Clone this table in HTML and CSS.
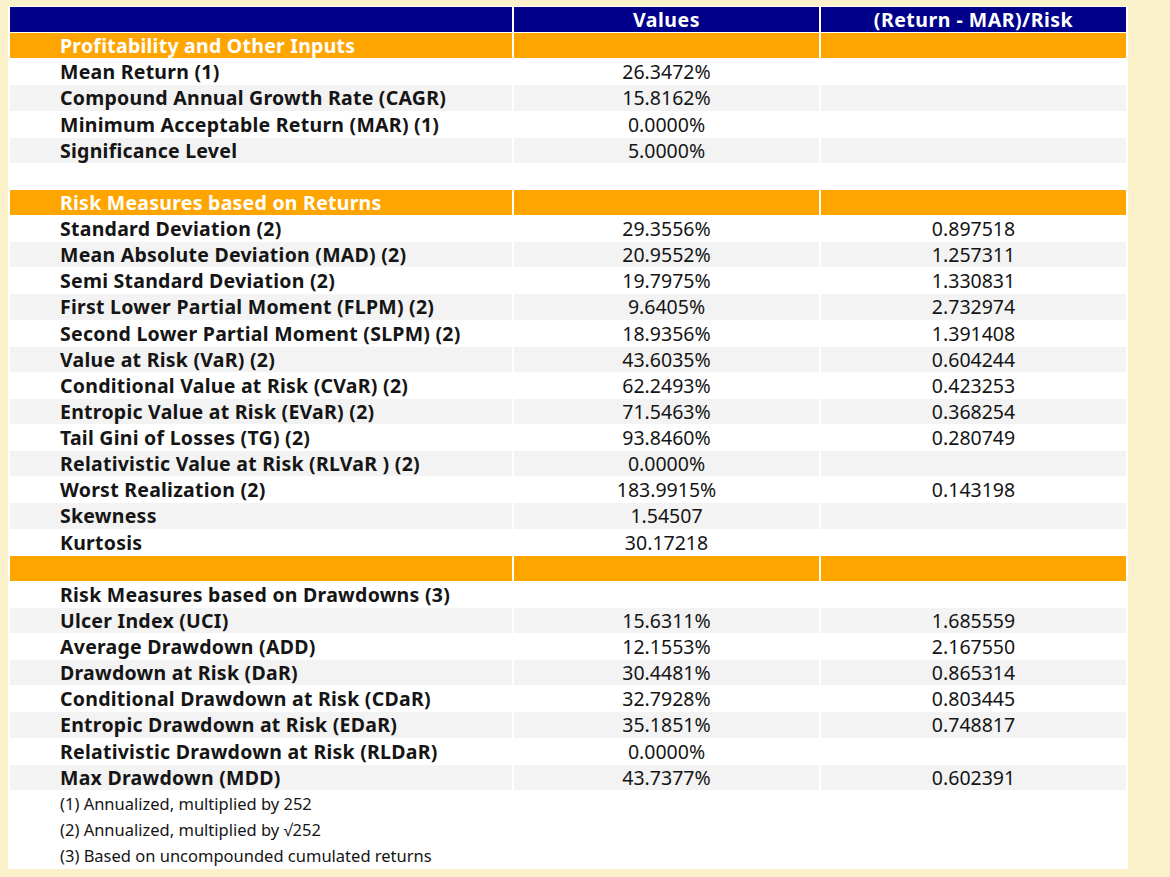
FILE: index.html
```html
<!DOCTYPE html>
<html>
<head>
<meta charset="utf-8">
<link rel="stylesheet" href="styles.css">
</head>
<body>
<div class="panel">
<table class="stats">
  <colgroup><col class="c1"><col class="c2"><col class="c3"></colgroup>
  <thead>
    <tr class="head"><th></th><th>Values</th><th>(Return - MAR)/Risk</th></tr>
  </thead>
  <tbody>
    <tr class="section"><td>Profitability and Other Inputs</td><td></td><td></td></tr>
    <tr><td>Mean Return (1)</td><td>26.3472%</td><td></td></tr>
    <tr class="alt"><td>Compound Annual Growth Rate (CAGR)</td><td>15.8162%</td><td></td></tr>
    <tr><td>Minimum Acceptable Return (MAR) (1)</td><td>0.0000%</td><td></td></tr>
    <tr class="alt"><td>Significance Level</td><td>5.0000%</td><td></td></tr>
    <tr><td></td><td></td><td></td></tr>
    <tr class="section"><td>Risk Measures based on Returns</td><td></td><td></td></tr>
    <tr><td>Standard Deviation (2)</td><td>29.3556%</td><td>0.897518</td></tr>
    <tr class="alt"><td>Mean Absolute Deviation (MAD) (2)</td><td>20.9552%</td><td>1.257311</td></tr>
    <tr><td>Semi Standard Deviation (2)</td><td>19.7975%</td><td>1.330831</td></tr>
    <tr class="alt"><td>First Lower Partial Moment (FLPM) (2)</td><td>9.6405%</td><td>2.732974</td></tr>
    <tr><td>Second Lower Partial Moment (SLPM) (2)</td><td>18.9356%</td><td>1.391408</td></tr>
    <tr class="alt"><td>Value at Risk (VaR) (2)</td><td>43.6035%</td><td>0.604244</td></tr>
    <tr><td>Conditional Value at Risk (CVaR) (2)</td><td>62.2493%</td><td>0.423253</td></tr>
    <tr class="alt"><td>Entropic Value at Risk (EVaR) (2)</td><td>71.5463%</td><td>0.368254</td></tr>
    <tr><td>Tail Gini of Losses (TG) (2)</td><td>93.8460%</td><td>0.280749</td></tr>
    <tr class="alt"><td>Relativistic Value at Risk (RLVaR ) (2)</td><td>0.0000%</td><td></td></tr>
    <tr><td>Worst Realization (2)</td><td>183.9915%</td><td>0.143198</td></tr>
    <tr class="alt"><td>Skewness</td><td>1.54507</td><td></td></tr>
    <tr><td>Kurtosis</td><td>30.17218</td><td></td></tr>
    <tr class="section"><td></td><td></td><td></td></tr>
    <tr><td>Risk Measures based on Drawdowns (3)</td><td></td><td></td></tr>
    <tr class="alt"><td>Ulcer Index (UCI)</td><td>15.6311%</td><td>1.685559</td></tr>
    <tr><td>Average Drawdown (ADD)</td><td>12.1553%</td><td>2.167550</td></tr>
    <tr class="alt"><td>Drawdown at Risk (DaR)</td><td>30.4481%</td><td>0.865314</td></tr>
    <tr><td>Conditional Drawdown at Risk (CDaR)</td><td>32.7928%</td><td>0.803445</td></tr>
    <tr class="alt"><td>Entropic Drawdown at Risk (EDaR)</td><td>35.1851%</td><td>0.748817</td></tr>
    <tr><td>Relativistic Drawdown at Risk (RLDaR)</td><td>0.0000%</td><td></td></tr>
    <tr class="alt"><td>Max Drawdown (MDD)</td><td>43.7377%</td><td>0.602391</td></tr>
    <tr class="note"><td>(1) Annualized, multiplied by 252</td><td></td><td></td></tr>
    <tr class="note"><td>(2) Annualized, multiplied by √252</td><td></td><td></td></tr>
    <tr class="note"><td>(3) Based on uncompounded cumulated returns</td><td></td><td></td></tr>
  </tbody>
</table>
</div>
</body>
</html>
```

FILE: styles.css
```css
html, body {
  margin: 0;
  padding: 0;
  background: #faf0ca;
}
body {
  font-family: "Noto Sans", "Open Sans", sans-serif;
  color: #151515;
}
.panel {
  margin: 6px 0 0 8px;
  width: 1120px;
  background: #fff;
}
.stats {
  border-collapse: separate;
  border-spacing: 2px 1px;
  table-layout: fixed;
  width: 1120px;
}
.c1 { width: 502px; }
.c2 { width: 305px; }
.c3 { width: 305px; }
.stats th, .stats td {
  height: 25.14px;
  padding: 0;
  line-height: 25px;
  white-space: nowrap;
  font-size: 19.5px;
  text-align: center;
  font-weight: normal;
}
.stats td:first-child {
  text-align: left;
  padding-left: 50px;
  font-weight: bold;
  letter-spacing: 0.25px;
}
.stats .head th {
  background: #00008b;
  color: #fff;
  font-weight: bold;
  letter-spacing: 0.5px;
}
.stats .section td {
  background: #ffa500;
  color: #fff;
}
.stats .alt td {
  background: #f3f3f3;
}
.stats .note td:first-child {
  font-weight: normal;
  font-size: 16.5px;
  letter-spacing: 0;
}
```
